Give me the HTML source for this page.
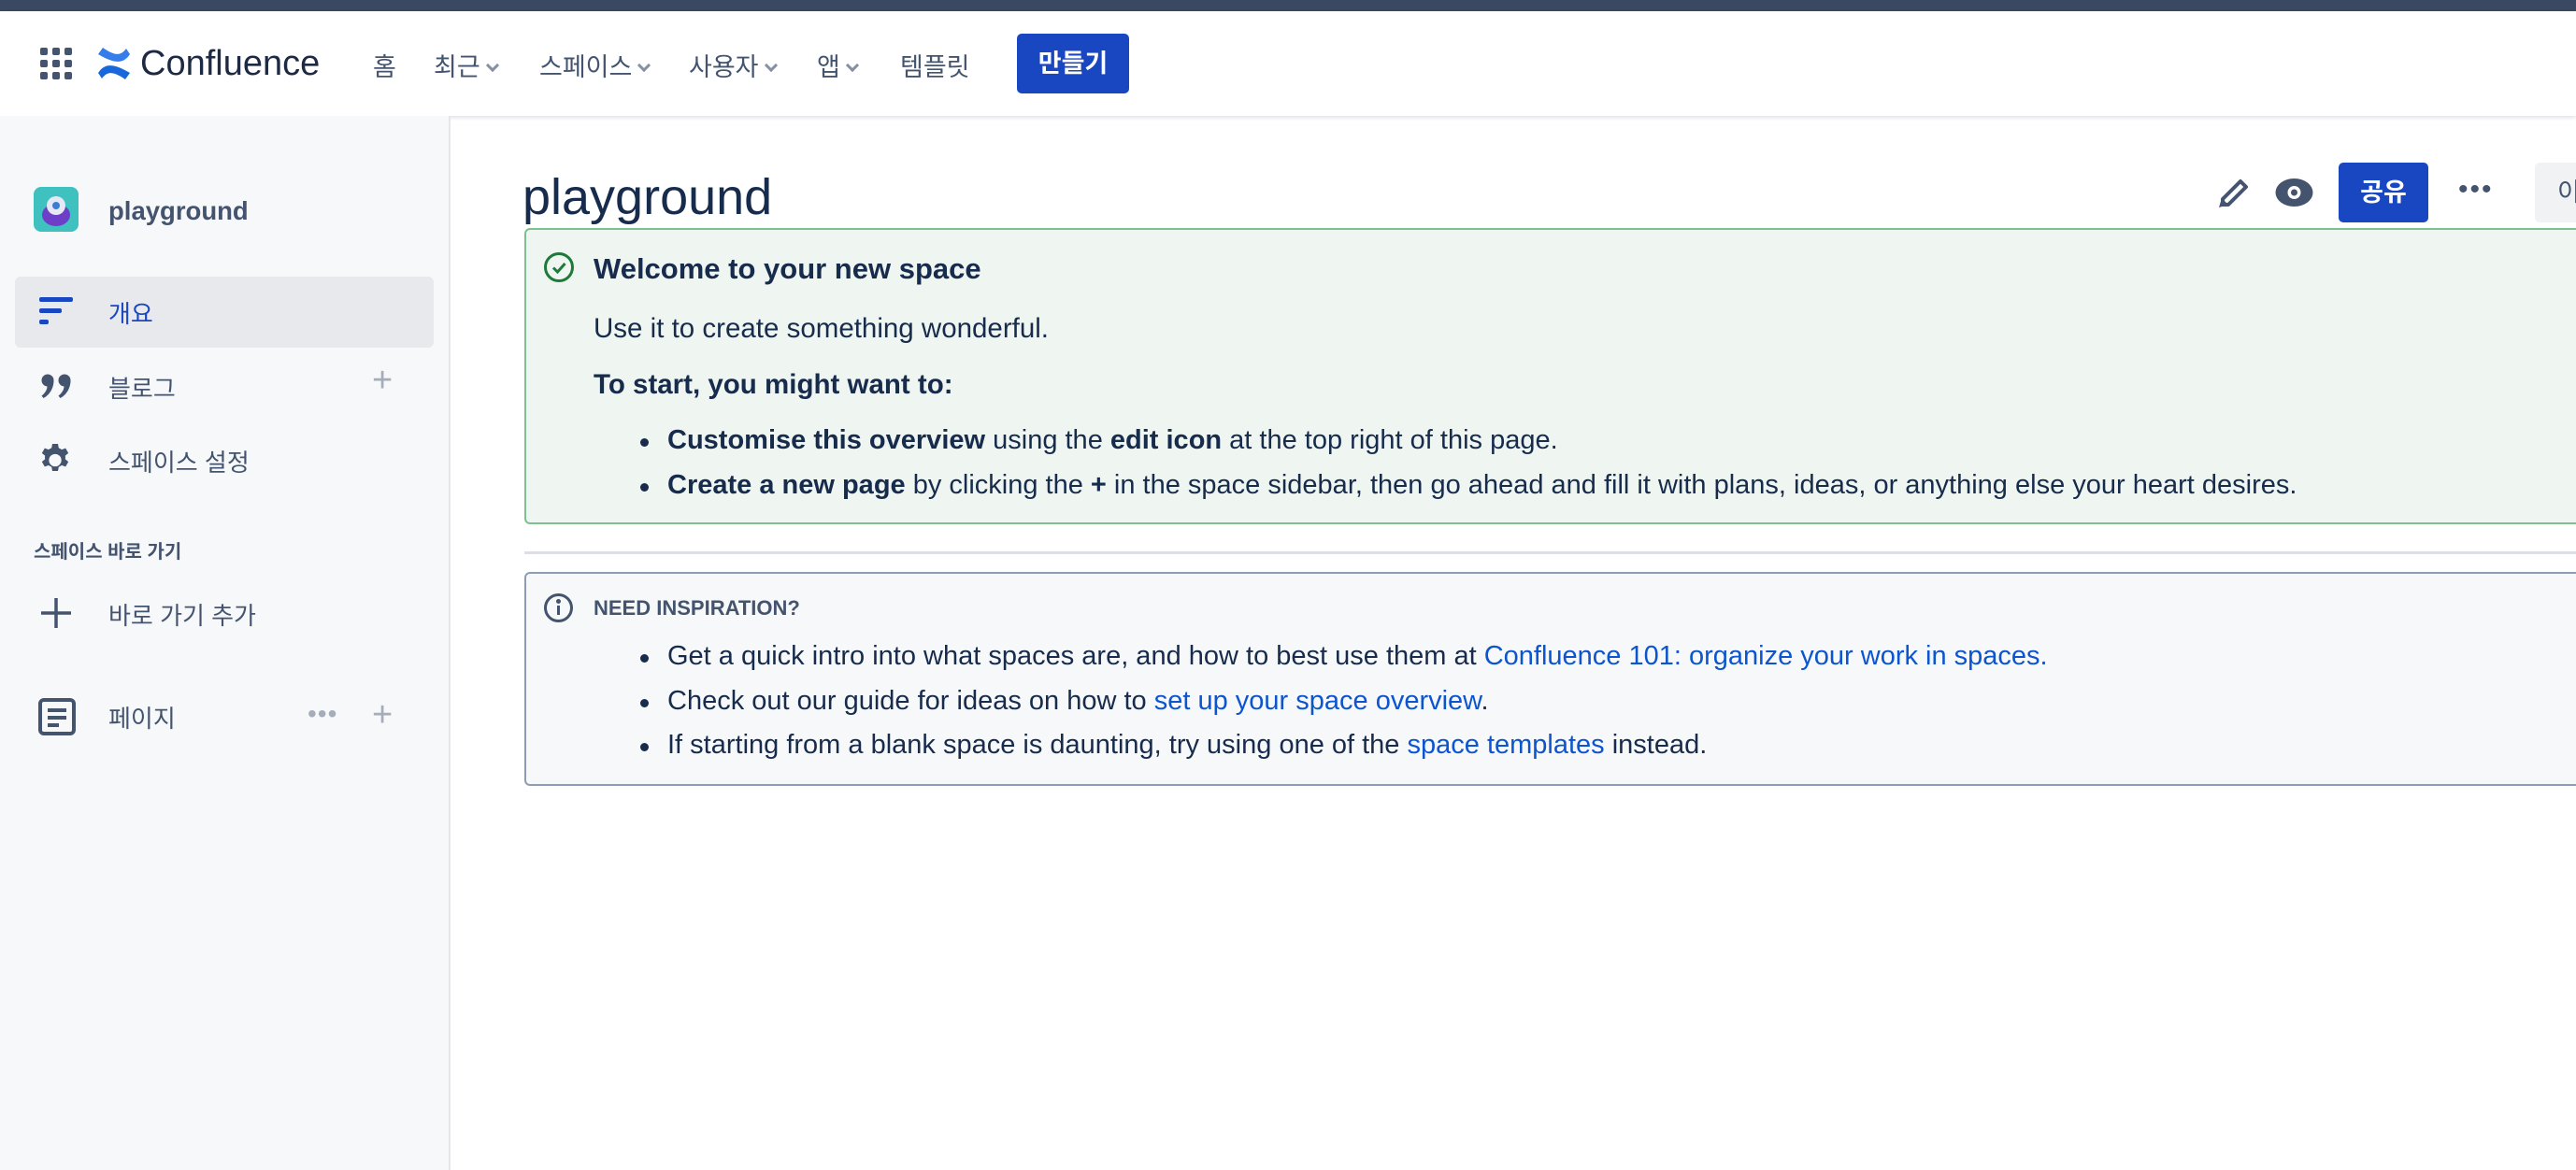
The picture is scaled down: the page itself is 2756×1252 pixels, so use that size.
<!DOCTYPE html>
<html><head><meta charset="utf-8"><style>
*{margin:0;padding:0;box-sizing:border-box}
body{width:2756px;height:1252px;overflow:hidden;background:#fff;font-family:"Liberation Sans","Noto Sans CJK KR",sans-serif;color:#172b4d;position:relative}
.a{position:absolute;white-space:nowrap}
.top{left:0;top:0;width:2756px;height:12px;background:#3b4862}
.hdr{left:0;top:12px;width:2756px;height:112px;background:#fff;box-shadow:0 2px 4px rgba(9,30,66,.13)}
.nav{font-size:27px;color:#44546f;top:50px}
.chev{display:inline-block;width:10px;height:10px;border-right:3px solid #8590a2;border-bottom:3px solid #8590a2;transform:rotate(45deg);margin-left:8px;position:relative;top:-6px}
.side{left:0;top:124px;width:482px;height:1128px;background:#f7f8f9;border-right:2px solid #e4e6ea}
.st{font-size:26px;color:#44546f}
.body{font-size:29.5px;color:#172b4d}
.li{position:absolute;left:714px;font-size:29px;color:#172b4d;white-space:nowrap}
.li:before{content:"";position:absolute;left:-29px;top:14px;width:9px;height:9px;border-radius:50%;background:#172b4d}
a{color:#0c55cf;text-decoration:none}
</style></head><body>
<div class="a top"></div>
<div class="a hdr"></div>
<svg class="a" style="left:42px;top:50px" width="36" height="36" viewBox="0 0 36 36" fill="#44546f">
<rect x="1" y="1" width="8" height="8" rx="2"/><rect x="14" y="1" width="8" height="8" rx="2"/><rect x="27" y="1" width="8" height="8" rx="2"/>
<rect x="1" y="14" width="8" height="8" rx="2"/><rect x="14" y="14" width="8" height="8" rx="2"/><rect x="27" y="14" width="8" height="8" rx="2"/>
<rect x="1" y="27" width="8" height="8" rx="2"/><rect x="14" y="27" width="8" height="8" rx="2"/><rect x="27" y="27" width="8" height="8" rx="2"/></svg>
<svg class="a" style="left:103px;top:50px" width="38" height="36" viewBox="0 0 38 36"><path d="M2 28c6-9 14-12 34 0l-5 7C18 26 12 26 6 34z" fill="#1868db"/><path d="M36 8C30 17 22 20 2 8l5-7c13 9 19 9 25 1z" fill="#357de8"/></svg>
<div class="a" style="left:150px;top:47px;font-size:38px;color:#1e2a44">Confluence</div>
<div class="a nav" style="left:399px">홈</div>
<div class="a nav" style="left:464px">최근<span class="chev"></span></div>
<div class="a nav" style="left:577px">스페이스<span class="chev"></span></div>
<div class="a nav" style="left:737px">사용자<span class="chev"></span></div>
<div class="a nav" style="left:874px">앱<span class="chev"></span></div>
<div class="a nav" style="left:963px">템플릿</div>
<div class="a" style="left:1088px;top:36px;width:120px;height:64px;background:#1847c1;border-radius:5px;color:#fff;font-size:27px;font-weight:bold;text-align:center;line-height:64px">만들기</div>

<div class="a side"></div>
<svg class="a" style="left:36px;top:200px" width="48" height="48" viewBox="0 0 48 48"><rect width="48" height="48" rx="8" fill="#3fc1c0"/><ellipse cx="24" cy="30" rx="15" ry="12" fill="#6d3fc9"/><circle cx="24" cy="20" r="10" fill="#e6e8f5"/><circle cx="24" cy="20" r="4" fill="#3b7fd4"/></svg>
<div class="a" style="left:116px;top:210px;font-size:27.5px;font-weight:bold;color:#44546f">playground</div>
<div class="a" style="left:16px;top:296px;width:448px;height:76px;background:#e8e9ed;border-radius:6px"></div>
<svg class="a" style="left:42px;top:318px" width="36" height="30" viewBox="0 0 36 30" fill="#1847c1"><rect x="0" y="0" width="36" height="5" rx="2"/><rect x="0" y="12" width="24" height="5" rx="2"/><rect x="0" y="24" width="10" height="5" rx="2"/></svg>
<div class="a" style="left:116px;top:316px;font-size:26px;color:#1847c1">개요</div>
<svg class="a" style="left:44px;top:400px" width="34" height="28" viewBox="0 0 34 28" fill="#44546f"><circle cx="7" cy="7" r="6.5"/><path d="M13.5 7c0 9-5 16-11 19l-2-2.5c4-3 6-7 6-10z"/><circle cx="25" cy="7" r="6.5"/><path d="M31.5 7c0 9-5 16-11 19l-2-2.5c4-3 6-7 6-10z"/></svg>
<div class="a st" style="left:116px;top:396px">블로그</div>
<div class="a" style="left:398px;top:386px;font-size:38px;color:#a5adba">+</div>
<svg class="a" style="left:39px;top:470px" width="40" height="40" viewBox="0 0 24 24"><path fill="#44546f" fill-rule="evenodd" d="M13.8 1.5l.5 2.6a8 8 0 011.9 1.1l2.5-.9 1.8 3.1-2 1.7a8 8 0 010 2.2l2 1.7-1.8 3.1-2.5-.9a8 8 0 01-1.9 1.1l-.5 2.6h-3.6l-.5-2.6a8 8 0 01-1.9-1.1l-2.5.9-1.8-3.1 2-1.7a8 8 0 010-2.2l-2-1.7 1.8-3.1 2.5.9a8 8 0 011.9-1.1l.5-2.6zM12 8a4 4 0 100 8 4 4 0 000-8z" transform="translate(0 1.5)"/></svg>
<div class="a st" style="left:116px;top:475px">스페이스 설정</div>
<div class="a" style="left:36px;top:574px;font-size:20px;font-weight:bold;color:#44546f">스페이스 바로 가기</div>
<svg class="a" style="left:42px;top:638px" width="36" height="36" viewBox="0 0 36 36"><path d="M18 2v32M2 18h32" stroke="#44546f" stroke-width="3.5"/></svg>
<div class="a st" style="left:116px;top:639px">바로 가기 추가</div>
<svg class="a" style="left:41px;top:747px" width="40" height="40" viewBox="0 0 40 40" fill="none" stroke="#44546f" stroke-width="4"><rect x="2" y="2" width="36" height="36" rx="4"/><path d="M10 13h20M10 21h20M10 29h12"/></svg>
<div class="a st" style="left:116px;top:749px">페이지</div>
<div class="a" style="left:329px;top:748px;font-size:28px;color:#a5adba;letter-spacing:1px">•••</div>
<div class="a" style="left:398px;top:744px;font-size:38px;color:#a5adba">+</div>

<div class="a" style="left:559px;top:180px;font-size:54px;color:#172b4d">playground</div>
<svg class="a" style="left:2373px;top:189px" width="35" height="34" viewBox="0 0 35 34"><path d="M5 24L24 5l6 6-19 19H5z" fill="none" stroke="#44546f" stroke-width="4" stroke-linejoin="round"/><path d="M1 33l3-10 7 7z" fill="#44546f"/></svg>
<svg class="a" style="left:2434px;top:190px" width="41" height="32" viewBox="0 0 41 32"><ellipse cx="20.5" cy="16" rx="20" ry="15" fill="#44546f"/><circle cx="20.5" cy="16" r="7" fill="#fff"/><circle cx="20.5" cy="16" r="3.5" fill="#44546f"/></svg>
<div class="a" style="left:2502px;top:174px;width:96px;height:64px;background:#1847c1;border-radius:5px;color:#fff;font-size:27px;font-weight:bold;text-align:center;line-height:64px">공유</div>
<div class="a" style="left:2630px;top:186px;font-size:30px;color:#44546f;letter-spacing:2px">•••</div>
<div class="a" style="left:2712px;top:174px;width:60px;height:64px;background:#f1f2f4;border-radius:5px;color:#44546f;font-size:27px;line-height:64px;padding-left:24px">이</div>

<div class="a" style="left:561px;top:244px;width:2220px;height:317px;background:#eff5f0;border:2px solid #7fc08f;border-radius:6px"></div>
<svg class="a" style="left:581px;top:269px" width="34" height="34" viewBox="0 0 34 34" fill="none" stroke="#1f7a3a" stroke-width="3"><circle cx="17" cy="17" r="14.5"/><path d="M11 17.5l4.5 4.5 8-9"/></svg>
<div class="a" style="left:635px;top:270px;font-size:31px;font-weight:bold;color:#172b4d">Welcome to your new space</div>
<div class="a body" style="left:635px;top:335px">Use it to create something wonderful.</div>
<div class="a body" style="left:635px;top:395px;font-weight:bold">To start, you might want to:</div>
<div class="li" style="top:455px"><b>Customise this overview</b> using the <b>edit icon</b> at the top right of this page.</div>
<div class="li" style="top:503px"><b>Create a new page</b> by clicking the <b>+</b> in the space sidebar, then go ahead and fill it with plans, ideas, or anything else your heart desires.</div>

<div class="a" style="left:561px;top:590px;width:2200px;height:3px;background:#dcdfe4"></div>

<div class="a" style="left:561px;top:612px;width:2220px;height:229px;background:#f7f8f9;border:2px solid #8d9db5;border-radius:6px"></div>
<svg class="a" style="left:581px;top:634px" width="33" height="33" viewBox="0 0 33 33" fill="none" stroke="#44546f" stroke-width="3"><circle cx="16.5" cy="16.5" r="14"/><path d="M16.5 14v10"/><circle cx="16.5" cy="9.5" r="1" fill="#44546f"/></svg>
<div class="a" style="left:635px;top:638px;font-size:22px;font-weight:bold;color:#44546f">NEED INSPIRATION?</div>
<div class="li" style="top:686px">Get a quick intro into what spaces are, and how to best use them at <a>Confluence 101: organize your work in spaces.</a></div>
<div class="li" style="top:734px">Check out our guide for ideas on how to <a>set up your space overview</a>.</div>
<div class="li" style="top:781px">If starting from a blank space is daunting, try using one of the <a>space templates</a> instead.</div>
</body></html>
